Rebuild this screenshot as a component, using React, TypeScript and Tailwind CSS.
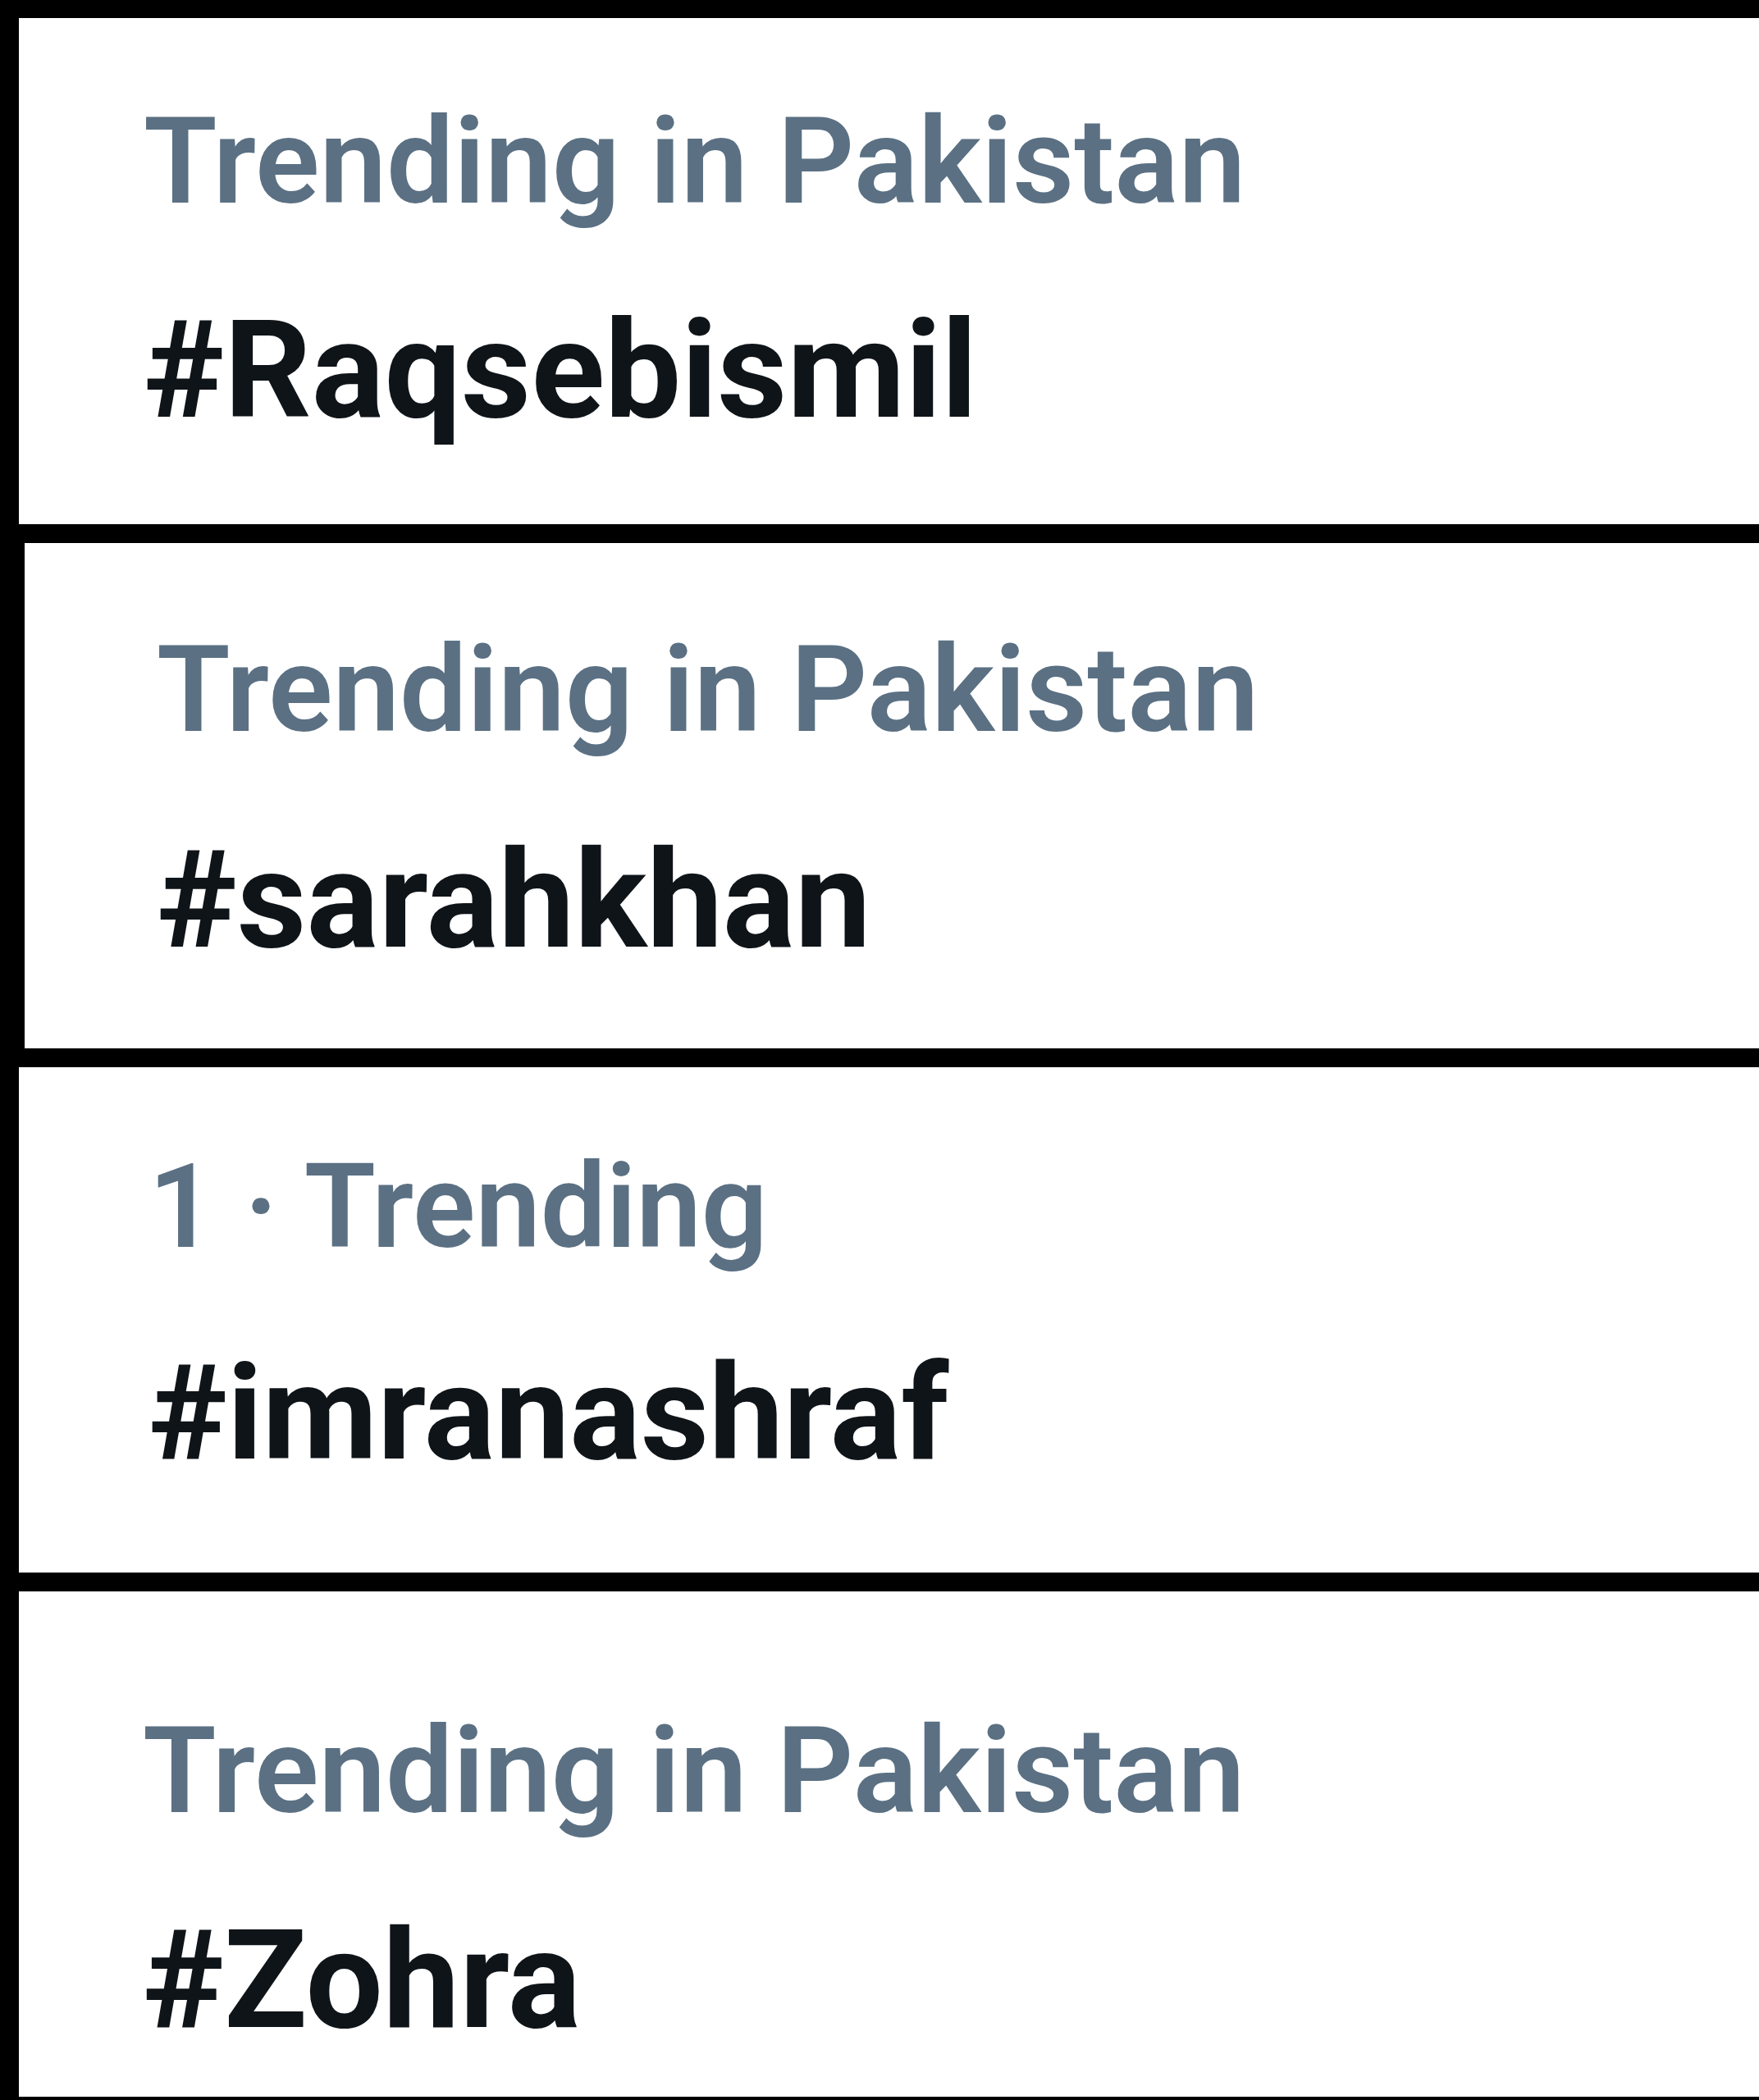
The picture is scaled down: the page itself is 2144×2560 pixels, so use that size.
import React from "react";

const font = { fontFamily: "Roboto, 'Noto Sans', Arial, sans-serif" };

export default function App() {
  return (
    <div className="w-[2144px] h-[2560px] bg-black overflow-hidden pt-[22px]" style={font}>
      <div className="flex flex-col gap-[23px]">
        <div className="ml-[23px] h-[617px] bg-white pl-[152px] pt-[103px]">
          <div className="text-[146px] leading-none font-semibold text-[#5b7083] whitespace-nowrap">Trending in Pakistan</div>
          <div className="mt-[98px] text-[166px] leading-none font-bold text-[#0f1419] whitespace-nowrap">#Raqsebismil</div>
        </div>
        <div className="ml-[30px] h-[616px] bg-white pl-[161px] pt-[107px]">
          <div className="text-[146px] leading-none font-semibold text-[#5b7083] whitespace-nowrap">Trending in Pakistan</div>
          <div className="mt-[100px] text-[165px] leading-none font-bold text-[#0f1419] whitespace-nowrap">#sarahkhan</div>
        </div>
        <div className="ml-[23px] h-[616px] bg-white pl-[158px] pt-[100px]">
          <div className="text-[142px] leading-none font-semibold text-[#5b7083] whitespace-nowrap">1 · Trending</div>
          <div className="mt-[99px] text-[162px] leading-none font-bold text-[#0f1419] whitespace-nowrap">#imranashraf</div>
        </div>
        <div className="ml-[23px] h-[616px] bg-white pl-[151px] pt-[147px]">
          <div className="text-[146px] leading-none font-semibold text-[#5b7083] whitespace-nowrap">Trending in Pakistan</div>
          <div className="mt-[98px] text-[167px] leading-none font-bold text-[#0f1419] whitespace-nowrap">#Zohra</div>
        </div>
      </div>
    </div>
  );
}
